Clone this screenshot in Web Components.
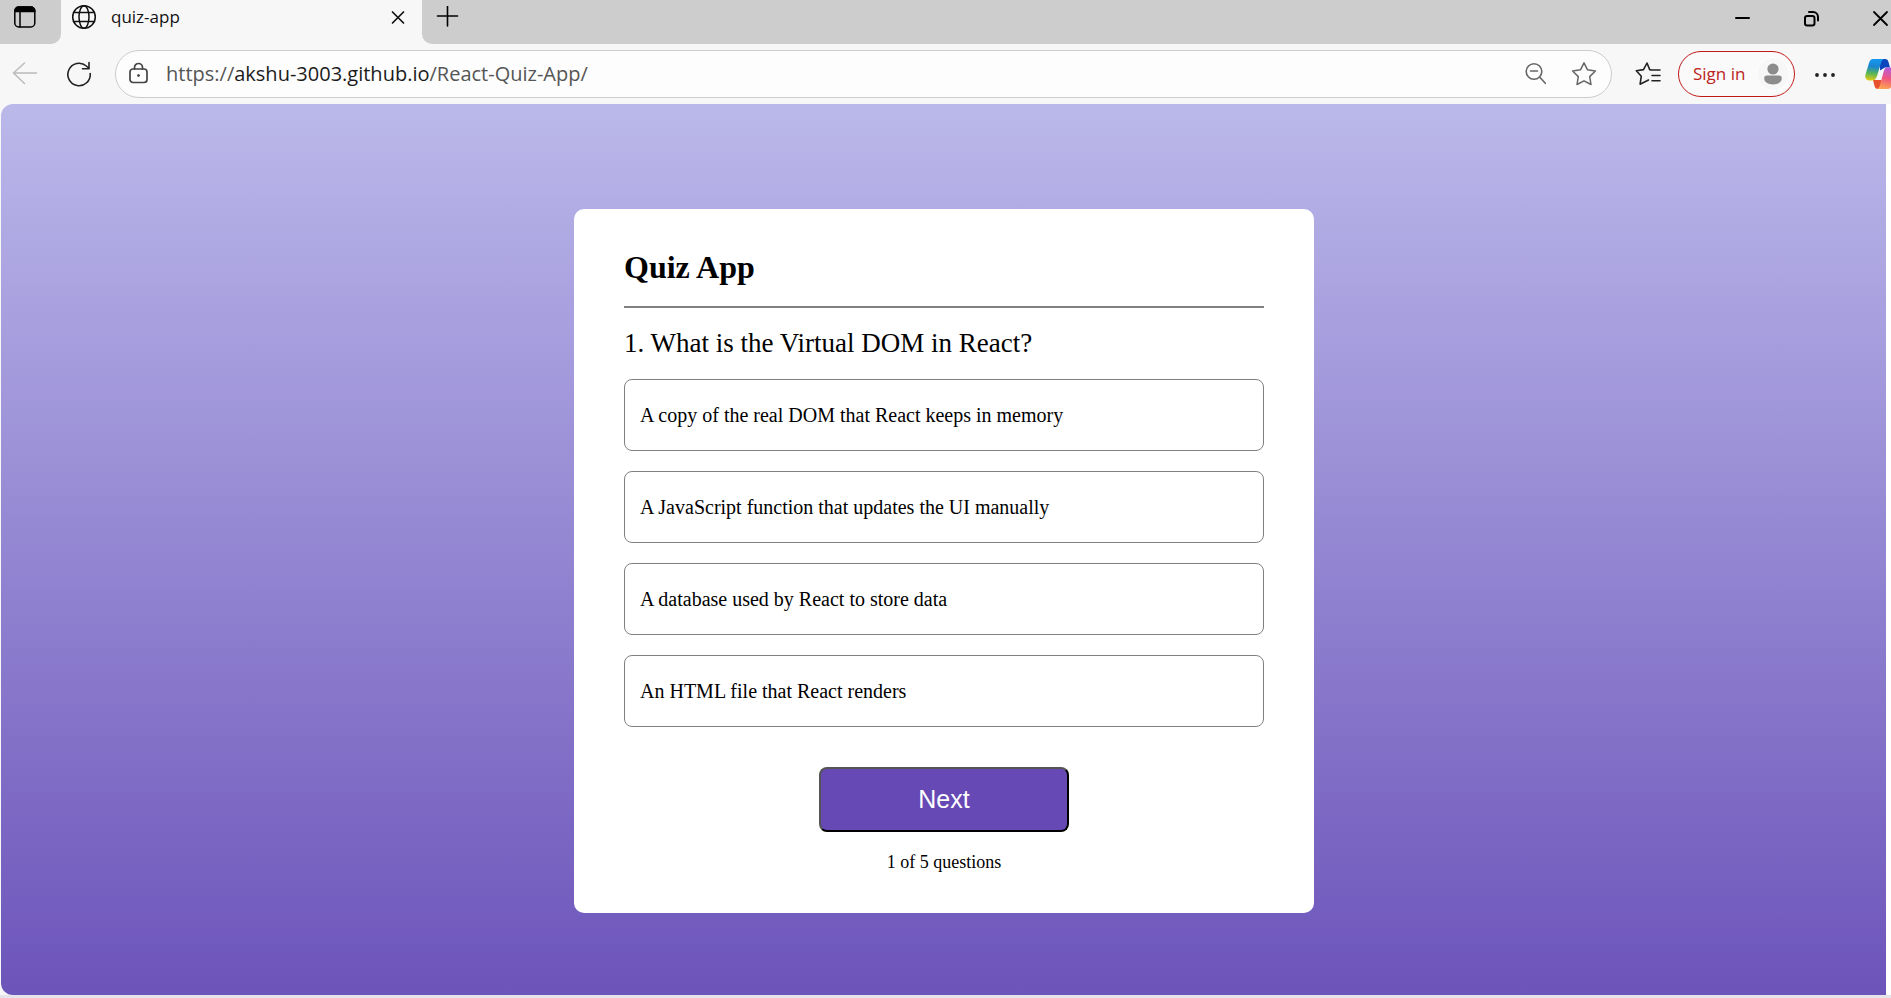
<!DOCTYPE html>
<html lang="en">
<head>
<meta charset="utf-8">
<title>quiz-app</title>
<style>
  html, body { margin: 0; height: 100%; }
  body { background: #f7f7f7; }
</style>
</head>
<body>
<browser-window>
  <tab-strip slot="tabs">quiz-app</tab-strip>
  <tool-bar slot="toolbar"></tool-bar>
  <quiz-card>
    <span slot="title">Quiz App</span>
    <span slot="question">1. What is the Virtual DOM in React?</span>
    <quiz-option>A copy of the real DOM that React keeps in memory</quiz-option>
    <quiz-option>A JavaScript function that updates the UI manually</quiz-option>
    <quiz-option>A database used by React to store data</quiz-option>
    <quiz-option>An HTML file that React renders</quiz-option>
    <span slot="progress">1 of 5 questions</span>
  </quiz-card>
</browser-window>

<script>
const define = (name, html) => {
  const template = document.createElement('template');
  template.innerHTML = html;
  customElements.define(name, class extends HTMLElement {
    constructor() {
      super();
      this.attachShadow({ mode: 'open' }).append(template.content.cloneNode(true));
    }
  });
};

const reset = `
  *, *::before, *::after { box-sizing: border-box; }
  svg { display: block; flex: none; fill: none; stroke: currentColor; stroke-linecap: round; stroke-linejoin: round; }
  svg.solid { fill: currentColor; stroke: none; }
  .icon { display: flex; align-items: center; justify-content: center; flex: none; padding: 0; border: 0; background: none; color: inherit; }
`;

define('browser-window', `
<style>
  ${reset}
  :host { display: flex; flex-direction: column; min-height: 100%; background: #f7f7f7; font-family: "Open Sans", "Noto Sans", sans-serif; }
  .content { flex: 1; display: flex; padding-left: 1px; border-bottom: 3px solid #e6e4ea; background: linear-gradient(to right, #f7f7f7 50%, #fff 50%); }
  main { flex: 1; padding: 105px 0 40px 1px; margin-right: 5px; border-radius: 12px 0 0 12px;
         background: linear-gradient(#bbb8ea, #6c54ba); }
</style>
<slot name="tabs"></slot>
<slot name="toolbar"></slot>
<div class="content"><main><slot></slot></main></div>
`);

define('tab-strip', `
<style>
  ${reset}
  :host { display: flex; height: 44px; color: #111; font-size: 17px; line-height: 22px; }
  .side { background: #cdcdcd; display: flex; color: #000; }
  .lead { width: 61px; padding: 4px 0 0 12px; align-items: flex-start; border-bottom-right-radius: 10px; }
  .rest { flex: 1; padding: 0 0 0 13px; border-bottom-left-radius: 10px; }
  .rest .icon { height: 36px; width: 24px; }
  .spacer { flex: 1; }
  .tab { width: 361px; display: flex; align-items: center; height: 34px; padding: 0 15px 0 10px; }
  .label { flex: 1; padding-left: 14px; }
  .window { display: flex; gap: 45px; }
</style>
<div class="side lead">
  <button class="icon" aria-label="Tab actions"><svg width="26" height="26" viewBox="0 0 26 26" stroke-width="1.500"><rect x="2.800" y="3" width="20" height="20" rx="4"/><path d="M2.800 7.500V7a4 4 0 0 1 4-4h12a4 4 0 0 1 4 4v.500z" fill="#000"/><path d="M8 8v15"/></svg></button>
</div>
<div class="tab">
  <svg width="26" height="26" viewBox="0 0 26 26" stroke-width="1.500"><circle cx="13" cy="13" r="11.300"/><ellipse cx="13" cy="13" rx="5" ry="11.300"/><path d="M2.500 8.500h21M2.500 17.500h21"/></svg>
  <span class="label"><slot></slot></span>
  <button class="icon" aria-label="Close tab"><svg width="18" height="18" viewBox="0 0 18 18" stroke-width="1.700"><path d="M3.500 4l11 11M14.500 4l-11 11"/></svg></button>
</div>
<div class="side rest">
  <button class="icon" aria-label="New tab"><svg width="24" height="24" viewBox="0 0 24 24" stroke-width="1.600"><path d="M12.500 0v20M2.500 10h20"/></svg></button>
  <div class="spacer"></div>
  <div class="window">
    <button class="icon" aria-label="Minimize"><svg width="24" height="24" viewBox="0 0 24 24" stroke-width="2"><path d="M7 12h13"/></svg></button>
    <button class="icon" aria-label="Restore"><svg width="24" height="24" viewBox="0 0 24 24" stroke-width="2"><rect x="7" y="10" width="9.500" height="9.500" rx="2.200"/><path d="M11 6h4a5 5 0 0 1 5 5v3.500"/></svg></button>
    <button class="icon" aria-label="Close window"><svg width="24" height="24" viewBox="0 0 24 24" stroke-width="1.800"><path d="M7 6l13 13M20 6L7 19"/></svg></button>
  </div>
</div>
`);

define('tool-bar', `
<style>
  ${reset}
  :host { display: flex; align-items: center; height: 60px; padding: 0 0 0 12px; overflow: hidden; color: #222; }
  .back { color: #bbb; margin-right: 28px; }
  .reload { margin-right: 22px; }
  address-bar { flex: 1; }
  .fav { margin: 0 17px 0 23px; }
  .sign { display: flex; align-items: center; justify-content: space-between; flex: none; width: 117px; height: 46px; padding: 0 4px 0 14px;
          border: 1px solid #c01a18; border-radius: 23px; background: #fafafa; color: #bc2320; font: 17px/24px "Open Sans", "Noto Sans", sans-serif; }
  .more { margin: 0 29px 0 19px; }
  .copilot { margin-right: -4px; }
</style>
<button class="icon back" aria-label="Back"><svg width="26" height="26" viewBox="0 0 26 26" stroke-width="1.500"><path d="M24.500 12H1.500M12.500 2L1.500 12l11 10.500"/></svg></button>
<button class="icon reload" aria-label="Refresh"><svg width="27" height="26" viewBox="0 0 27 26" stroke-width="1.600"><path d="M24.200 12.500a11.200 11.200 0 1 1-3.900-7.500l2.800 2.500M23 1.500v6.200h-6.500"/></svg></button>
<address-bar></address-bar>
<button class="icon fav" aria-label="Favorites"><svg width="26" height="26" viewBox="0 0 26 26" stroke-width="1.600"><path d="M25 9h-8.500l-1.800-.4L12 2 8.500 8.600 1.300 9.800l5 5.400-1.200 8 6.900-3.400 1.500-.8M17 14.500h8M17 19.800h8"/></svg></button>
<button class="sign">Sign in <svg class="solid" width="34" height="34" viewBox="0 0 34 34"><circle cx="17" cy="17" r="16.500" fill="#f7f7f7" stroke="#fff"/><circle cx="17" cy="12" r="5.600" fill="#8c8c8c"/><path d="M11 18.500h12a2.800 2.800 0 0 1 2.800 2.800c0 4-4 6.200-8.800 6.200s-8.800-2.200-8.800-6.200a2.800 2.800 0 0 1 2.800-2.800z" fill="#8c8c8c"/></svg></button>
<button class="icon more" aria-label="Settings and more"><svg class="solid" width="22" height="22" viewBox="0 0 22 22"><circle cx="3" cy="12" r="1.900"/><circle cx="11" cy="12" r="1.900"/><circle cx="19" cy="12" r="1.900"/></svg></button>
<button class="icon copilot" aria-label="Copilot"><svg class="solid" width="30" height="30" viewBox="0 0 30 30">
  <defs>
    <linearGradient id="l" x1=".4" y1="0" x2=".3" y2="1"><stop offset="0" stop-color="#1597f0"/><stop offset=".35" stop-color="#1b86d0"/><stop offset=".65" stop-color="#52b35c"/><stop offset="1" stop-color="#e4cc16"/></linearGradient>
    <linearGradient id="r" x1=".6" y1="0" x2=".4" y2="1"><stop offset="0" stop-color="#b45be0"/><stop offset=".5" stop-color="#f0567f"/><stop offset="1" stop-color="#fda450"/></linearGradient>
  </defs>
  <path d="M15 0h5c2 0 3 1 3.500 3l1.500 5.500h-5l-5 3z" fill="#0c45bd"/>
  <path d="M8 21h8l2 4 -2 5h-3c-2 0-3-1-3.500-3z" fill="#e8502d"/>
  <path d="M8 0h11c-2 1-2.500 2.500-3 4l-4 13c-1 3-2.500 4.500-5 4.500H4c-3 0-4.500-3-3.500-6L4 4c1-3 2-4 4-4z" fill="url(#l)"/>
  <path d="M22 8.500h5c3 0 4.500 3 3.500 6L27 26c-1 3-2 4-4 4H12c2-1 2.500-2.500 3-4l3.500-13c1-3 1.500-4.500 3.500-4.500z" fill="url(#r)"/>
</svg></button>
`);

define('address-bar', `
<style>
  ${reset}
  :host { display: flex; align-items: center; height: 48px; min-width: 0; padding: 0 14px 0 12px; border: 1px solid #ccc; border-radius: 24px; background: #fdfdfd; box-sizing: border-box; color: #444; }
  .url { flex: 1; padding-left: 16px; font-size: 20px; line-height: 28px; white-space: nowrap; color: #555; text-decoration: none; }
  .url b { font-weight: 400; color: #1b1b1b; }
  .star { margin-left: 23px; color: #666; }
  .zoom { color: #666; }
</style>
<button class="icon" aria-label="Site information"><svg width="22" height="26" viewBox="0 0 22 26" stroke-width="1.700"><rect x="2" y="8" width="17" height="13.500" rx="3"/><path d="M6.500 8V6.500a4 4 0 0 1 8 0V8"/><circle cx="10.500" cy="14.500" r="1" fill="currentColor" stroke-width="1"/></svg></button>
<a class="url" href="https://akshu-3003.github.io/React-Quiz-App/">https://<b>akshu-3003.github.io</b>/React-Quiz-App/</a>
<button class="icon zoom" aria-label="Zoom out"><svg width="24" height="26" viewBox="0 0 24 26" stroke-width="1.600"><circle cx="10" cy="10.500" r="7.800"/><path d="M6.500 10h7M15.800 16.300l5.500 6"/></svg></button>
<button class="icon star" aria-label="Add to favorites"><svg width="26" height="26" viewBox="0 0 26 26" stroke-width="1.500"><path d="M13 1.800l3.500 7 7.900 1.200-5.700 5.600 1.300 7.900-7-3.700-7 3.700 1.300-7.900L1.600 10l7.900-1.200z"/></svg></button>
`);

define('quiz-card', `
<style>
  ${reset}
  :host { display: flex; flex-direction: column; gap: 20px; box-sizing: border-box; width: 740px; max-width: 100%; margin: 0 auto; padding: 40px 50px; border-radius: 10px; background: #fff; color: #000; font-family: "Liberation Serif", serif; }
  h1 { margin: 0; font-size: 32px; line-height: 37px; }
  hr { width: 100%; height: 2px; margin: 0; border: 0; background: #808080; }
  h2 { margin: 0; font-size: 27px; line-height: 31px; font-weight: 500; }
  .options { display: flex; flex-direction: column; gap: 20px; margin-bottom: 20px; }
  .next { width: 250px; height: 65px; margin: 0 auto; border: 2px outset #000; border-radius: 8px; background: #6649b5; color: #fff; font: 500 25px "Liberation Sans", sans-serif; }
  p { margin: 0; text-align: center; font-size: 18px; line-height: 21px; }
</style>
<h1><slot name="title"></slot></h1>
<hr>
<h2><slot name="question"></slot></h2>
<div class="options"><slot></slot></div>
<button class="next">Next</button>
<p><slot name="progress"></slot></p>
`);

define('quiz-option', `
<style>
  ${reset}
  :host { display: flex; }
  button { flex: 1; height: 72px; padding: 0 15px; border: 1px solid #808080; border-radius: 8px; background: none; color: #000; text-align: left; font: 20px/24px "Liberation Serif", serif; }
</style>
<button><slot></slot></button>
`);
</script>
</body>
</html>
